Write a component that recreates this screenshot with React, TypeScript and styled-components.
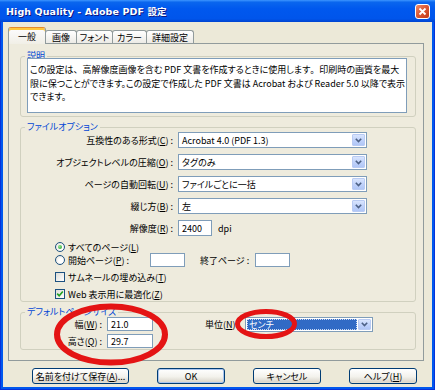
import React from "react";
import styled, { createGlobalStyle } from "styled-components";

const GlobalStyle = createGlobalStyle`
  html, body {
    margin: 0;
    padding: 0;
    background: #ffffff;
  }
  body {
    font-family: "Noto Sans CJK JP", "Liberation Sans", sans-serif;
    font-size: 9px;
    color: #000000;
    font-feature-settings: "palt";
  }
  * {
    box-sizing: border-box;
  }
`;

const Window = styled.div`
  position: relative;
  width: 435px;
  height: 390px;
  background: #0058ee;
  padding: 0 3px 3px;
  display: flex;
  flex-direction: column;
  overflow: hidden;
  box-shadow: inset 1px 0 #0831d9, inset -1px 0 #0831d9, inset 0 -1px #0831d9;
`;

const TitleBar = styled.div`
  height: 22px;
  margin: 0 -3px;
  padding: 0 5px 0 6px;
  display: flex;
  align-items: center;
  justify-content: space-between;
  background: linear-gradient(
    to bottom,
    #3d95ff 0%,
    #0a66ee 10%,
    #0058ee 40%,
    #0055eb 85%,
    #0044d0 100%
  );
`;

const Title = styled.span`
  color: #ffffff;
  font-family: "DejaVu Sans", "Liberation Sans", "Noto Sans CJK JP", sans-serif;
  font-weight: bold;
  font-size: 9.5px;
  letter-spacing: 0.1px;
  text-shadow: 1px 1px #0a1883;
`;

const CloseButton = styled.div`
  width: 15px;
  height: 15px;
  border: 1px solid #ffffff;
  border-radius: 3px;
  background: linear-gradient(135deg, #f08c6a 0%, #dc5a36 45%, #c23a17 100%);
  display: flex;
  align-items: center;
  justify-content: center;
`;

const Client = styled.div`
  flex: 1;
  background: #ece9d8;
  padding: 5px 8px 3px 5px;
  display: flex;
  flex-direction: column;
`;

const TabRow = styled.div`
  height: 17px;
  margin-bottom: -1px;
  display: flex;
  align-items: flex-end;
  position: relative;
  z-index: 1;
`;

const Tab = styled.div<{ $w: number; $active?: boolean }>`
  width: ${p => p.$w}px;
  height: ${p => (p.$active ? 17 : 13)}px;
  margin-bottom: ${p => (p.$active ? 0 : 1)}px;
  margin-left: -1px;
  border: 1px solid #919b9c;
  border-bottom: none;
  border-top-color: ${p => (p.$active ? "#e68b2c" : "#919b9c")};
  border-radius: 3px 3px 0 0;
  background: ${p =>
    p.$active
      ? "linear-gradient(to bottom, #fcfcfe, #f1efe6)"
      : "linear-gradient(to bottom, #ffffff, #ecebe6)"};
  box-shadow: ${p => (p.$active ? "inset 0 2px #ffc83c" : "none")};
  display: flex;
  align-items: center;
  justify-content: center;
  padding-top: ${p => (p.$active ? 1 : 0)}px;
  position: relative;
  z-index: ${p => (p.$active ? 2 : 1)};
  &:first-child {
    margin-left: 0;
  }
`;

const Panel = styled.div`
  height: 318px;
  border: 1px solid #919b9c;
  background: #eeebdd;
  padding: 12px 7px 0 11px;
  display: flex;
  flex-direction: column;
`;

const GroupBox = styled.div<{ $mt: number }>`
  margin-top: ${p => p.$mt}px;
  border: 1px solid #d0d0bf;
  border-radius: 3px;
  padding-bottom: 1px;
  display: flex;
  flex-direction: column;
`;

const Legend = styled.div`
  align-self: flex-start;
  margin: -6px 0 0 4px;
  padding: 0 2px;
  height: 10px;
  line-height: 10px;
  background: #eeebdd;
  color: #0046d5;
`;

const DescBox = styled.div`
  margin: -3px 8px 2px 6px;
  height: 55px;
  border: 1px solid #7f9db9;
  background: #ffffff;
  padding: 4px 1px 0 2px;
  line-height: 13.5px;
  white-space: nowrap;
  overflow: hidden;
`;

// full-width punctuation, as in the dialog's UI font
const Punct = styled.span`
  font-feature-settings: normal;
`;

const Rows = styled.div`
  display: flex;
  flex-direction: column;
  gap: 6px;
`;

const FieldRow = styled.div`
  height: 16px;
  display: flex;
  align-items: center;
`;

const FieldLabel = styled.span<{ $w: number }>`
  width: ${p => p.$w}px;
  flex-shrink: 0;
  text-align: right;
  white-space: nowrap;
  margin-right: 5px;
`;

const Combo = styled.div<{ $w: number; $h: number }>`
  width: ${p => p.$w}px;
  height: ${p => p.$h}px;
  border: 1px solid #7f9db9;
  background: #ffffff;
  display: flex;
  align-items: center;
  padding: 1px;
`;

const ComboText = styled.span<{ $selected?: boolean }>`
  flex: 1;
  height: 100%;
  display: flex;
  align-items: center;
  padding-left: 2px;
  margin-right: 1px;
  white-space: nowrap;
  background: ${p => (p.$selected ? "#316ac5" : "transparent")};
  color: ${p => (p.$selected ? "#ffffff" : "#000000")};
  outline: ${p => (p.$selected ? "1px dotted #c8d8f4" : "none")};
  outline-offset: -1px;
`;

const DropButton = styled.span`
  width: 13px;
  height: 100%;
  border: 1px solid #b9cbf3;
  border-radius: 1px;
  background: linear-gradient(to bottom, #d9e5fd 0%, #c1d3fb 50%, #b0c6f6 100%);
  display: flex;
  align-items: center;
  justify-content: center;
`;

const TextBox = styled.div<{ $w: number; $h: number }>`
  width: ${p => p.$w}px;
  height: ${p => p.$h}px;
  border: 1px solid #7f9db9;
  background: #ffffff;
  padding-left: 3px;
  display: flex;
  align-items: center;
  flex-shrink: 0;
`;

const Unit = styled.span`
  margin-left: 6px;
`;

const OptionRow = styled.div<{ $h: number; $mt: number }>`
  height: ${p => p.$h}px;
  margin-top: ${p => p.$mt}px;
  padding-left: 34px;
  display: flex;
  align-items: center;
  white-space: nowrap;
`;

const Radio = styled.span<{ $checked?: boolean }>`
  width: 10px;
  height: 10px;
  flex-shrink: 0;
  border: 1px solid #1c5180;
  border-radius: 50%;
  background: radial-gradient(circle at 60% 60%, #ffffff 30%, #dcd9cf 100%);
  display: flex;
  align-items: center;
  justify-content: center;
  &::after {
    content: "";
    display: ${p => (p.$checked ? "block" : "none")};
    width: 4px;
    height: 4px;
    border-radius: 50%;
    background: radial-gradient(circle at 35% 35%, #8fe38f, #21a121);
  }
`;

const CheckBox = styled.span`
  width: 10px;
  height: 10px;
  flex-shrink: 0;
  border: 1px solid #1c5180;
  background: linear-gradient(135deg, #dcdcd7 0%, #ffffff 100%);
  display: flex;
  align-items: center;
  justify-content: center;
`;

const OptionText = styled.span<{ $w?: number; $ml?: number }>`
  margin-left: ${p => p.$ml ?? 3}px;
  width: ${p => (p.$w ? `${p.$w}px` : "auto")};
  flex-shrink: 0;
`;

const PageSizeBody = styled.div`
  display: flex;
  align-items: flex-start;
`;

const SizeColumn = styled.div`
  display: flex;
  flex-direction: column;
  gap: 3px;
`;

const SizeRow = styled.div`
  height: 14px;
  display: flex;
  align-items: center;
`;

const UnitRow = styled.div`
  height: 15px;
  margin-left: 43px;
  display: flex;
  align-items: center;
`;

const ButtonBar = styled.div`
  margin: 7px 0 0 24px;
  height: 16px;
  display: flex;
  gap: 28px;
`;

const Button = styled.div<{ $w: number; $default?: boolean }>`
  width: ${p => p.$w}px;
  height: 16px;
  border: 1px solid #003c74;
  border-radius: 3px;
  background: linear-gradient(to bottom, #ffffff 0%, #f3f2ec 55%, #d6d0c5 100%);
  box-shadow: ${p =>
    p.$default ? "inset 0 0 0 1px #a9c4ef" : "inset 0 -1px #e3ded1"};
  display: flex;
  align-items: center;
  justify-content: center;
  white-space: nowrap;
`;

const U = styled.span`
  text-decoration: underline;
`;

const Annotation = styled.svg`
  position: absolute;
  left: 0;
  top: 0;
  pointer-events: none;
`;

const Chevron = () => (
  <svg width="7" height="5" viewBox="0 0 7 5">
    <path d="M0.8 0.8 L3.5 3.6 L6.2 0.8" fill="none" stroke="#4d6185" strokeWidth="1.6" />
  </svg>
);

const Check = () => (
  <svg width="8" height="8" viewBox="0 0 8 8">
    <path d="M1.2 3.6 L3.2 5.8 L6.8 1.6" fill="none" stroke="#21a121" strokeWidth="1.6" />
  </svg>
);

function Select({ w, h = 16, value, selected }: { w: number; h?: number; value: string; selected?: boolean }) {
  return (
    <Combo $w={w} $h={h}>
      <ComboText $selected={selected}>{value}</ComboText>
      <DropButton>
        <Chevron />
      </DropButton>
    </Combo>
  );
}

export default function App() {
  return (
    <>
      <GlobalStyle />
      <Window>
        <TitleBar>
          <Title>High Quality - Adobe PDF 設定</Title>
          <CloseButton>
            <svg width="9" height="9" viewBox="0 0 9 9">
              <path d="M1.5 1.5 L7.5 7.5 M7.5 1.5 L1.5 7.5" stroke="#ffffff" strokeWidth="1.8" />
            </svg>
          </CloseButton>
        </TitleBar>
        <Client>
          <TabRow>
            <Tab $w={38} $active>一般</Tab>
            <Tab $w={32}>画像</Tab>
            <Tab $w={37}>フォント</Tab>
            <Tab $w={35}>カラー</Tab>
            <Tab $w={48}>詳細設定</Tab>
          </TabRow>
          <Panel>
            <GroupBox $mt={0}>
              <Legend>説明</Legend>
              <DescBox>
                この設定は<Punct>、</Punct>高解像度画像を含む PDF 文書を作成するときに使用します<Punct>。</Punct>印刷時の画質を最大
                <br />
                限に保つことができます。この設定で作成した PDF 文書は Acrobat および Reader 5.0 以降で表示
                <br />
                できます。
              </DescBox>
            </GroupBox>

            <GroupBox $mt={10}>
              <Legend>ファイルオプション</Legend>
              <Rows>
                <FieldRow>
                  <FieldLabel $w={152}>
                    互換性のある形式(<U>C</U>) :
                  </FieldLabel>
                  <Select w={189} value="Acrobat 4.0 (PDF 1.3)" />
                </FieldRow>
                <FieldRow>
                  <FieldLabel $w={152}>
                    オブジェクトレベルの圧縮(<U>O</U>) :
                  </FieldLabel>
                  <Select w={189} value="タグのみ" />
                </FieldRow>
                <FieldRow>
                  <FieldLabel $w={152}>
                    ページの自動回転(<U>U</U>) :
                  </FieldLabel>
                  <Select w={189} value="ファイルごとに一括" />
                </FieldRow>
                <FieldRow>
                  <FieldLabel $w={152}>
                    綴じ方(<U>B</U>) :
                  </FieldLabel>
                  <Select w={189} value="左" />
                </FieldRow>
                <FieldRow>
                  <FieldLabel $w={152}>
                    解像度(<U>R</U>) :
                  </FieldLabel>
                  <TextBox $w={34} $h={16}>2400</TextBox>
                  <Unit>dpi</Unit>
                </FieldRow>
              </Rows>
              <OptionRow $h={10} $mt={6}>
                <Radio $checked />
                <OptionText>
                  すべてのページ(<U>L</U>)
                </OptionText>
              </OptionRow>
              <OptionRow $h={14} $mt={1}>
                <Radio />
                <OptionText $w={82}>
                  開始ページ(<U>P</U>) :
                </OptionText>
                <TextBox $w={35} $h={14} />
                <OptionText $ml={15}>終了ページ :</OptionText>
                <OptionText $ml={6}>
                  <TextBox $w={35} $h={14} />
                </OptionText>
              </OptionRow>
              <OptionRow $h={12} $mt={4}>
                <CheckBox />
                <OptionText>
                  サムネールの埋め込み(<U>T</U>)
                </OptionText>
              </OptionRow>
              <OptionRow $h={12} $mt={5}>
                <CheckBox>
                  <Check />
                </CheckBox>
                <OptionText>
                  Web 表示用に最適化(<U>Z</U>)
                </OptionText>
              </OptionRow>
            </GroupBox>

            <GroupBox $mt={10}>
              <Legend>デフォルトページサイズ</Legend>
              <PageSizeBody>
                <SizeColumn>
                  <SizeRow>
                    <FieldLabel $w={81}>
                      幅(<U>W</U>) :
                    </FieldLabel>
                    <TextBox $w={46} $h={14}>21.0</TextBox>
                  </SizeRow>
                  <SizeRow>
                    <FieldLabel $w={81}>
                      高さ(<U>Q</U>) :
                    </FieldLabel>
                    <TextBox $w={46} $h={14}>29.7</TextBox>
                  </SizeRow>
                </SizeColumn>
                <UnitRow>
                  <FieldLabel $w={44}>
                    単位(<U>N</U>) :
                  </FieldLabel>
                  <Select w={128} h={15} value="センチ" selected />
                </UnitRow>
              </PageSizeBody>
            </GroupBox>
          </Panel>
          <ButtonBar>
            <Button $w={97}>
              名前を付けて保存(<U>A</U>)...
            </Button>
            <Button $w={68} $default>
              OK
            </Button>
            <Button $w={68}>キャンセル</Button>
            <Button $w={68}>
              ヘルプ(<U>H</U>)
            </Button>
          </ButtonBar>
        </Client>
        <Annotation width="435" height="390" viewBox="0 0 435 390">
          <ellipse cx="111" cy="334.5" rx="54" ry="28" fill="none" stroke="#e41414" strokeWidth="6" />
          <ellipse cx="266" cy="324" rx="28.5" ry="12.5" fill="none" stroke="#e41414" strokeWidth="5" />
        </Annotation>
      </Window>
    </>
  );
}
